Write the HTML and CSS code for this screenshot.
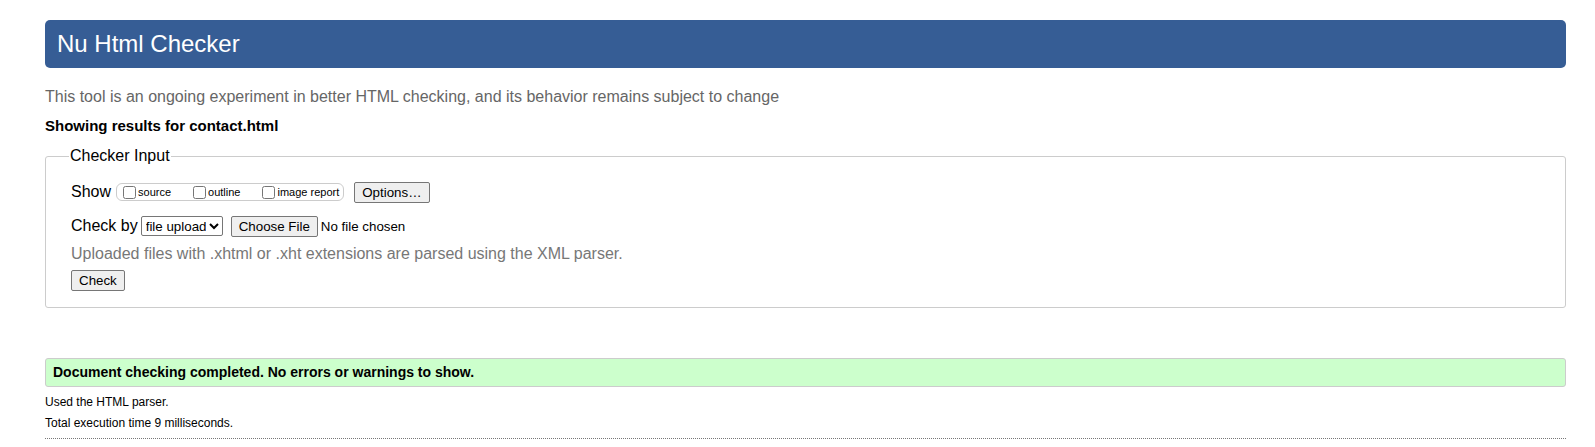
FILE: index.html
```html
<!DOCTYPE html>
<html>
<head>
<meta charset="utf-8">
<link rel="stylesheet" href="styles.css">
</head>
<body>
<div class="page">
  <h1 class="title">Nu Html Checker</h1>
  <p class="intro">This tool is an ongoing experiment in better HTML checking, and its behavior remains subject to change</p>
  <p class="showing">Showing results for contact.html</p>
  <fieldset class="input">
    <legend class="legend">Checker Input</legend>
    <div class="row show-row">
      <span class="label">Show</span>
      <span class="group">
        <label class="opt opt-source"><input type="checkbox" class="cb">source</label>
        <label class="opt opt-outline"><input type="checkbox" class="cb">outline</label>
        <label class="opt"><input type="checkbox" class="cb">image report</label>
      </span>
      <button class="btn btn-options">Options…</button>
    </div>
    <div class="row by-row">
      <span class="label">Check by</span>
      <select class="sel"><option>file upload</option></select>
      <button class="btn btn-file">Choose File</button>
      <span class="nofile">No file chosen</span>
    </div>
    <p class="note">Uploaded files with .xhtml or .xht extensions are parsed using the XML parser.</p>
    <div class="row"><button class="btn btn-check">Check</button></div>
  </fieldset>
  <div class="success">Document checking completed. No errors or warnings to show.</div>
  <p class="meta">Used the HTML parser.</p>
  <p class="meta">Total execution time 9 milliseconds.</p>
  <hr class="rule">
</div>
</body>
</html>
```
FILE: styles.css
```css
html, body { margin: 0; padding: 0; background: #fff; }
body { font-family: "Liberation Sans", Arial, sans-serif; color: #000; }
.page { padding: 20px 0 0 45px; width: 1521px; }
.title {
  margin: 0;
  height: 48px;
  box-sizing: border-box;
  background: #365d95;
  color: #fff;
  border-radius: 5px;
  font-weight: normal;
  font-size: 24px;
  line-height: 48px;
  padding-left: 12px;
}
.intro { margin: 20px 0 0; color: #666; font-size: 16px; line-height: 18px; }
.showing { margin: 11px 0 0; font-weight: bold; font-size: 15px; line-height: 18px; }
.input {
  margin: 12px 0 0;
  border: 1px solid #ccc;
  border-radius: 3px;
  padding: 16px 24px 16px 25px;
  min-width: 0;
}
.legend { font-size: 16px; padding: 0 1px; margin-left: -2px; line-height: 18px; }
.row { display: flex; align-items: center; }
.label { font-size: 16px; line-height: 18px; }
.show-row { height: 22px; }
.group {
  display: inline-flex;
  align-items: center;
  border: 1px solid #ccc;
  border-radius: 6px;
  height: 16px;
  padding: 0 4px 0 3px;
  margin-left: 5px;
  margin-right: 10px;
}
.opt { font-size: 11px; display: inline-flex; align-items: center; line-height: 12px; }
.opt-source { margin-right: 19px; }
.opt-outline { margin-right: 19px; }
.cb { margin: 0 2px 0 3px; width: 13px; height: 13px; }
.btn {
  font-family: "Liberation Sans", Arial, sans-serif;
  font-size: 13.33px;
  color: #000;
  background: #efefef;
  border: 1px solid #767676;
  border-radius: 2px;
  padding: 0 7px;
  height: 21px;
  line-height: 19px;
}
.by-row { margin-top: 12px; height: 22px; }
.sel {
  font-family: "Liberation Sans", Arial, sans-serif;
  font-size: 13.33px;
  height: 20px;
  width: 82px;
  margin-left: 3px;
  margin-right: 8px;
  border: 1px solid #767676;
  border-radius: 2px;
  padding: 0;
  background: #fff;
  color: #000;
}
.nofile { font-size: 13.33px; margin-left: 3px; }
.note { margin: 8px 0 0; color: #777; font-size: 16px; line-height: 18px; }
.btn-check { margin-top: 7px; }
.success {
  margin-top: 50px;
  background: #cfc;
  border: 1px solid #ccc;
  border-radius: 3px;
  height: 29px;
  box-sizing: border-box;
  padding-left: 7px;
  font-weight: bold;
  font-size: 14px;
  line-height: 27px;
}
.meta { margin: 8px 0 0; font-size: 12px; line-height: 14px; }
.meta + .meta { margin-top: 7px; }
.rule { margin: 8px 0 0; border: 0; border-top: 1px dotted #777; height: 0; }
```
